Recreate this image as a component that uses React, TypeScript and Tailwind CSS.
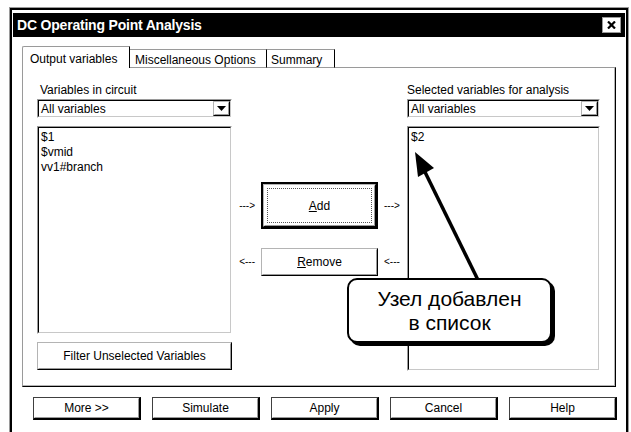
import type { ReactNode } from 'react'

const ui = "font-['Liberation_Sans',Arial,sans-serif] text-[12px] leading-[14px] text-black"

// Win95 style sunken field (listbox / combo)
const Sunken = ({ className, children }: { className: string; children?: ReactNode }) => (
  <div
    className={`border border-t-[#9a9a9a] border-l-[#9a9a9a] border-b-white border-r-white ${className}`}
  >
    <div className="h-full w-full border border-t-black border-l-black border-b-[#c8c8c8] border-r-[#c8c8c8] bg-white">
      {children}
    </div>
  </div>
)

const Raised = ({ className, children }: { className: string; children?: ReactNode }) => (
  <div
    className={`border border-t-[#b4b4b4] border-l-[#b4b4b4] border-b-black border-r-black ${className}`}
  >
    <div className="h-full w-full border border-t-white border-l-white border-b-[#9a9a9a] border-r-[#9a9a9a] bg-white flex items-center justify-center">
      {children}
    </div>
  </div>
)

const Combo = () => (
  <Sunken className="h-[19px] mt-[2px]">
    <div className="flex h-full items-stretch">
      <div className="flex-1 pl-[2px] flex items-center">All variables</div>
      <Raised className="w-[17px]">
        <svg width="9" height="5" viewBox="0 0 9 5">
          <polygon points="0,0 9,0 4.5,5" fill="black" />
        </svg>
      </Raised>
    </div>
  </Sunken>
)

const BottomButton = ({ label }: { label: string }) => (
  <div className="w-[108px] h-[23px] border border-[#404040] border-b-2 border-r-2 border-b-black border-r-black">
    <div className="h-full w-full border border-t-white border-l-white border-b-[#9a9a9a] border-r-[#9a9a9a] flex items-center justify-center">
      {label}
    </div>
  </div>
)

export default function App() {
  return (
    <div className={`relative w-[631px] h-[432px] overflow-hidden bg-white ${ui}`}>
      {/* window */}
      <div className="ml-[9px] mt-[7px] w-[620px] h-[440px] border border-[#9a9a9a]">
        <div className="h-full border-2 border-black pt-[3px] px-[1px]">
          {/* title bar */}
          <div className="h-[24px] bg-black flex items-center justify-between pl-[4px] pr-[4px]">
            <span className="text-white font-bold text-[14px] tracking-[-0.2px]">DC Operating Point Analysis</span>
            <div className="w-[19px] h-[16px] border border-[#9a9a9a] bg-white flex items-center justify-center">
              <svg width="9" height="8" viewBox="0 0 9 8">
                <path d="M1 0.5 L8 7.5 M8 0.5 L1 7.5" stroke="black" strokeWidth="2.2" />
              </svg>
            </div>
          </div>

          {/* tabs */}
          <div className="mt-[9px] ml-[9px] flex items-end h-[22px] relative z-10 -mb-[1px]">
            <div className="w-[108px] h-[22px] border-t border-l border-[#9a9a9a] rounded-tl-[2px] border-r border-r-black bg-white flex items-start pt-[5px] pl-[7px]">
              Output variables
            </div>
            <div className="w-[137px] h-[19px] border-t border-[#9a9a9a] border-r border-r-black border-b border-b-[#9a9a9a] bg-white flex items-start pt-[3px] pl-[5px]">
              Miscellaneous Options
            </div>
            <div className="w-[68px] h-[19px] border-t border-[#9a9a9a] border-r border-r-black border-b border-b-[#9a9a9a] bg-white flex items-start pt-[3px] pl-[4px]">
              Summary
            </div>
          </div>

          {/* tab panel */}
          <div className="ml-[9px] w-[594px] h-[320px] border border-t-[#9a9a9a] border-l-[#9a9a9a] border-b-black border-r-black">
            <div className="h-full border-b border-r border-b-[#b4b4b4] border-r-[#b4b4b4] flex pl-[14px] pt-[15px]">
              {/* left column */}
              <div className="w-[195px] flex flex-col">
                <div className="pl-[3px]">Variables in circuit</div>
                <Combo />
                <Sunken className="h-[208px] mt-[8px]">
                  <div className="pl-[2px] pt-[2px] leading-[15px]">
                    <div>$1</div>
                    <div>$vmid</div>
                    <div>vv1#branch</div>
                  </div>
                </Sunken>
                <Raised className="h-[28px] mt-[8px]">Filter Unselected Variables</Raised>
              </div>

              {/* middle column */}
              <div className="w-[175px] flex flex-col items-center">
                <div className="mt-[99px] flex items-center gap-[6px]">
                  <span className="text-[10px] w-[18px] text-right">---&gt;</span>
                  <div className="w-[117px] h-[47px] border-2 border-black">
                    <Raised className="h-full">
                      <div className="w-[105px] h-[35px] border border-dotted border-[#555] flex items-center justify-center">
                        <span><span className="underline">A</span>dd</span>
                      </div>
                    </Raised>
                  </div>
                  <span className="text-[10px] w-[18px]">---&gt;</span>
                </div>
                <div className="mt-[19px] flex items-center gap-[6px]">
                  <span className="text-[10px] w-[18px] text-right">&lt;---</span>
                  <Raised className="w-[117px] h-[28px]">
                    <span><span className="underline">R</span>emove</span>
                  </Raised>
                  <span className="text-[10px] w-[18px]">&lt;---</span>
                </div>
              </div>

              {/* right column */}
              <div className="w-[193px] flex flex-col">
                <div>Selected variables for analysis</div>
                <Combo />
                <Sunken className="h-[245px] mt-[8px]">
                  <div className="pl-[2px] pt-[2px] leading-[15px]">$2</div>
                </Sunken>
              </div>
            </div>
          </div>

          {/* dialog buttons */}
          <div className="mt-[10px] pl-[20px] flex gap-[11px]">
            <BottomButton label="More >>" />
            <BottomButton label="Simulate" />
            <BottomButton label="Apply" />
            <BottomButton label="Cancel" />
            <BottomButton label="Help" />
          </div>
        </div>
      </div>

      {/* annotation arrow */}
      <svg className="absolute left-0 top-0 pointer-events-none" width="631" height="432">
        <line x1="478" y1="280" x2="424" y2="170" stroke="black" strokeWidth="3.5" />
        <polygon points="415,152 434,168 418,177" fill="black" />
      </svg>

      {/* callout */}
      <div className="absolute left-[347px] top-[278px] w-[205px] h-[65px] rounded-[10px] border-2 border-black bg-white shadow-[3px_3px_0_0_#000] flex flex-col items-center justify-center font-['Liberation_Sans',Arial,sans-serif] text-[21px] leading-[24px]">
        <div>Узел добавлен</div>
        <div>в список</div>
      </div>
    </div>
  )
}
